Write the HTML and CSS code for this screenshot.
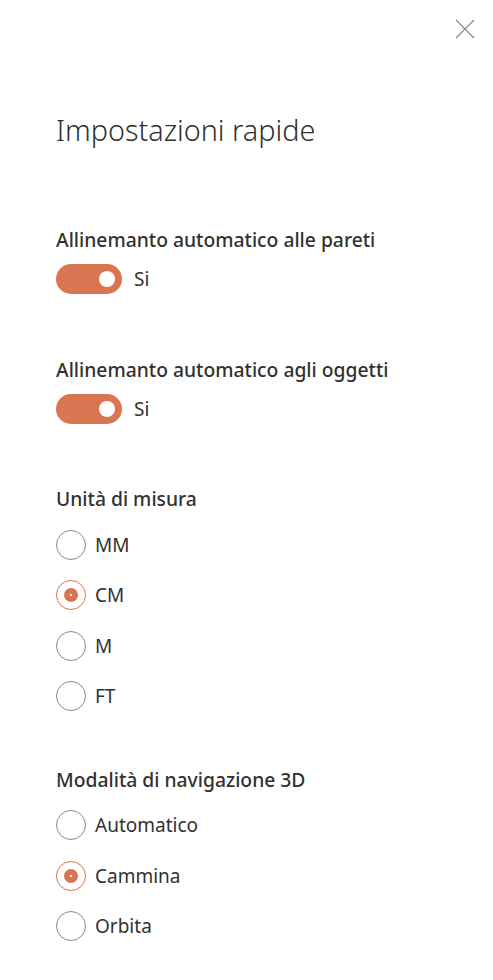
FILE: index.html
```html
<!DOCTYPE html>
<html lang="it">
<head>
<meta charset="utf-8">
<title>Impostazioni rapide</title>
<link rel="stylesheet" href="styles.css">
</head>
<body>
<div class="panel">
  <div class="panel-header">
    <button class="close-btn" aria-label="Chiudi">
      <svg width="20" height="20" viewBox="0 0 20 20"><path d="M1 1 L19 19 M19 1 L1 19" stroke="#8a8886" stroke-width="1.2" fill="none"/></svg>
    </button>
  </div>
  <h1 class="title">Impostazioni rapide</h1>

  <section class="group group-toggle first">
    <div class="label">Allinemanto automatico alle pareti</div>
    <div class="toggle-row">
      <span class="toggle on"><span class="thumb"></span></span>
      <span class="toggle-text">Si</span>
    </div>
  </section>

  <section class="group group-toggle">
    <div class="label">Allinemanto automatico agli oggetti</div>
    <div class="toggle-row">
      <span class="toggle on"><span class="thumb"></span></span>
      <span class="toggle-text">Si</span>
    </div>
  </section>

  <section class="group group-radio">
    <div class="label">Unità di misura</div>
    <div class="options">
      <div class="option"><span class="radio"></span><span class="option-text">MM</span></div>
      <div class="option"><span class="radio checked"></span><span class="option-text">CM</span></div>
      <div class="option"><span class="radio"></span><span class="option-text">M</span></div>
      <div class="option"><span class="radio"></span><span class="option-text">FT</span></div>
    </div>
  </section>

  <section class="group group-radio last">
    <div class="label">Modalità di navigazione 3D</div>
    <div class="options">
      <div class="option"><span class="radio"></span><span class="option-text">Automatico</span></div>
      <div class="option"><span class="radio checked"></span><span class="option-text">Cammina</span></div>
      <div class="option"><span class="radio"></span><span class="option-text">Orbita</span></div>
    </div>
  </section>
</div>
</body>
</html>
```

FILE: styles.css
```css
html, body {
  margin: 0;
  padding: 0;
  background: #ffffff;
}
body {
  font-family: "Noto Sans", "Open Sans", sans-serif;
  color: #323130;
}
.panel {
  display: flex;
  flex-direction: column;
  padding: 0 0 0 56px;
}
.panel-header {
  display: flex;
  justify-content: flex-end;
  height: 58px;
  padding-right: 18px;
}
.close-btn {
  background: none;
  border: 0;
  padding: 0;
  margin-top: 19px;
  width: 20px;
  height: 20px;
  display: flex;
}
.title {
  margin: 0;
  margin-top: 52px;
  font-size: 28.8px;
  font-weight: 300;
  line-height: 40px;
  color: #323130;
}
.group {
  display: flex;
  flex-direction: column;
}
.group.first { margin-top: 76px; }
.group-toggle + .group-toggle { margin-top: 62px; }
.group-toggle + .group-radio { margin-top: 61px; }
.group-radio + .group-radio { margin-top: 55px; }
.label {
  font-size: 19.3px;
  font-weight: 500;
  line-height: 28px;
}
.toggle-row {
  display: flex;
  align-items: center;
  gap: 12px;
  margin-top: 10px;
  height: 30px;
}
.toggle {
  width: 66px;
  height: 30px;
  border-radius: 15px;
  background: #d97551;
  display: flex;
  align-items: center;
  justify-content: flex-end;
  padding-right: 7px;
  box-sizing: border-box;
}
.thumb {
  width: 16px;
  height: 16px;
  border-radius: 50%;
  background: #ffffff;
}
.toggle-text, .option-text {
  font-size: 19px;
  line-height: 28px;
}
.options {
  display: flex;
  flex-direction: column;
  gap: 20.4px;
  margin-top: 17px;
}
.group-radio.last .options { margin-top: 16px; }
.option {
  display: flex;
  align-items: center;
  gap: 9px;
  height: 30px;
}
.radio {
  width: 30px;
  height: 30px;
  box-sizing: border-box;
  border: 1px solid #8a8886;
  border-radius: 50%;
  display: flex;
  align-items: center;
  justify-content: center;
  flex: none;
}
.radio.checked {
  border-color: #d97551;
}
.radio.checked::after {
  content: "";
  width: 14px;
  height: 14px;
  border-radius: 50%;
  background: radial-gradient(circle, #ffffff 0 1px, #d97551 1.5px);
}
```
